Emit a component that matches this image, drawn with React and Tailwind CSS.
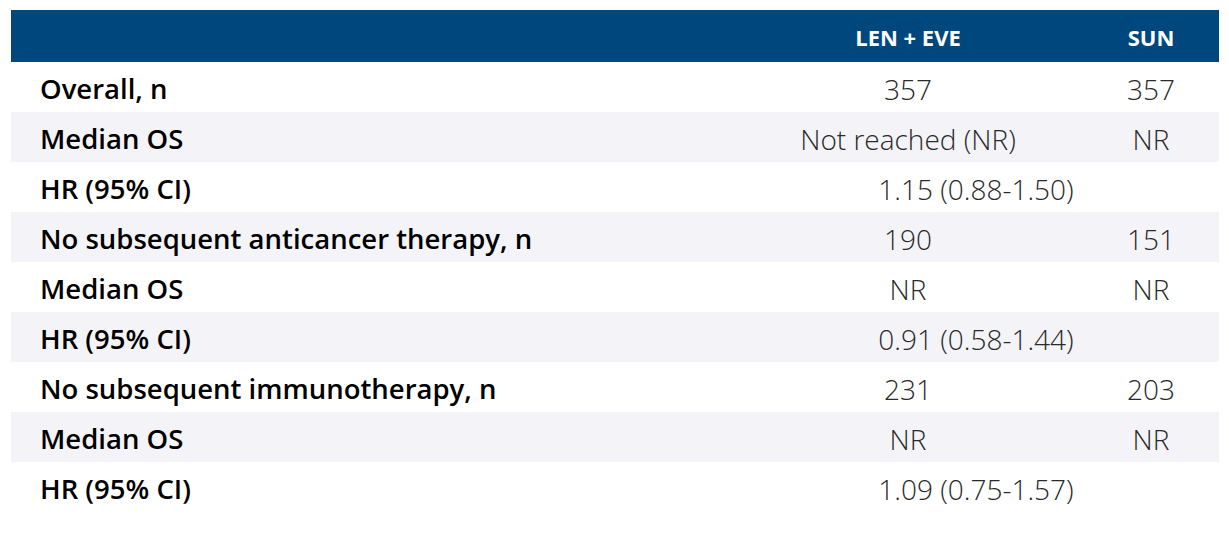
const rows = [
  { label: "Overall, n", a: "357", b: "357" },
  { label: "Median OS", a: "Not reached (NR)", b: "NR" },
  { label: "HR (95% CI)", hr: "1.15 (0.88-1.50)" },
  { label: "No subsequent anticancer therapy, n", a: "190", b: "151" },
  { label: "Median OS", a: "NR", b: "NR" },
  { label: "HR (95% CI)", hr: "0.91 (0.58-1.44)" },
  { label: "No subsequent immunotherapy, n", a: "231", b: "203" },
  { label: "Median OS", a: "NR", b: "NR" },
  { label: "HR (95% CI)", hr: "1.09 (0.75-1.57)" },
];

export default function App() {
  return (
    <div className="w-[1229px] h-[538px] bg-white pt-[10px] pl-[11px] font-['Open_Sans',sans-serif]">
      <div className="w-[1208px]">
        <div className="grid grid-cols-[722px_350px_136px] h-[52px] items-center bg-[#00477e] text-white font-bold text-[22px] pt-[2px]">
          <div />
          <div className="text-center">LEN + EVE</div>
          <div className="text-center">SUN</div>
        </div>
        {rows.map((r, i) => (
          <div
            key={i}
            className={`grid grid-cols-[722px_350px_136px] h-[50px] items-center pt-[3px] ${i % 2 === 1 ? "bg-[#f4f4f8]" : "bg-white"}`}
          >
            <div className="pl-[29px] text-[27.5px] font-semibold text-black">{r.label}</div>
            {r.hr ? (
              <div className="col-span-2 text-center text-[28px] font-light text-[#2a2a2a]">{r.hr}</div>
            ) : (
              <>
                <div className="text-center text-[28px] font-light text-[#2a2a2a]">{r.a}</div>
                <div className="text-center text-[28px] font-light text-[#2a2a2a]">{r.b}</div>
              </>
            )}
          </div>
        ))}
      </div>
    </div>
  );
}
